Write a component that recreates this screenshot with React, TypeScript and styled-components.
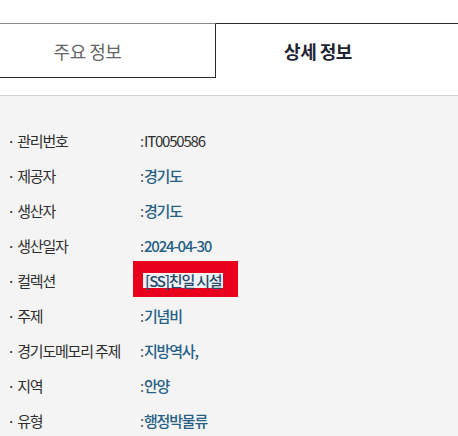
import React from 'react'
import styled, { createGlobalStyle } from 'styled-components'

const GlobalStyle = createGlobalStyle`
  html, body {
    margin: 0;
    padding: 0;
    background: #fff;
    font-family: "Noto Sans CJK KR", "Noto Sans", sans-serif;
  }
`;

const Page = styled.div`
  width: 458px;
  height: 436px;
  overflow: hidden;
  padding-top: 23px;
  box-sizing: border-box;
`;

const Tabs = styled.div`
  display: flex;
  height: 55px;
`;

const Tab = styled.div<{ $active?: boolean }>`
  box-sizing: border-box;
  display: flex;
  align-items: center;
  justify-content: center;
  font-size: 18px;
  letter-spacing: -0.5px;
  ${({ $active }) =>
    $active
      ? `
    flex: 1;
    border-top: 1px solid #2b2b2b;
    color: #1e2433;
    font-weight: 700;
    padding-right: 38px;
  `
      : `
    width: 216px;
    border-top: 1px solid #8a8a8a;
    border-right: 1px solid #2b2b2b;
    border-bottom: 1px solid #2b2b2b;
    color: #666;
    padding-right: 40px;
  `}
`;

const Detail = styled.div`
  margin-top: 17px;
  border-top: 1px solid #d2d2d2;
  background: #f4f4f4;
  padding-top: 27px;
  height: 400px;
`;

const Row = styled.div`
  display: flex;
  align-items: center;
  height: 35px;
  font-size: 15px;
  letter-spacing: -1.2px;
`;

const Label = styled.div`
  width: 140px;
  box-sizing: border-box;
  padding-left: 7px;
  color: #2e2e2e;
  display: flex;
  gap: 3px;
`;

const Colon = styled.span`
  color: #555;
  margin-right: 1px;
`;

const Value = styled.span<{ $plain?: boolean }>`
  color: ${({ $plain }) => ($plain ? '#2e2e2e' : '#265f86')};
  font-weight: ${({ $plain }) => ($plain ? 400 : 500)};
`;

const Marked = styled.span`
  display: inline-flex;
  align-items: center;
  background: #e8001d;
  margin: -12px 0 -8px -7px;
  padding: 12px 15px 9px 10px;
`;

const Selected = styled.span`
  background: #eef2f7;
  color: #24496a;
  font-weight: 500;
  padding: 0 2px;
  line-height: 15px;
`;

type Item = { label: string; value: string; plain?: boolean; marked?: boolean };

const items: Item[] = [
  { label: '관리번호', value: 'IT0050586', plain: true },
  { label: '제공자', value: '경기도' },
  { label: '생산자', value: '경기도' },
  { label: '생산일자', value: '2024-04-30' },
  { label: '컬렉션', value: '[SS]친일 시설', marked: true },
  { label: '주제', value: '기념비' },
  { label: '경기도메모리 주제', value: '지방역사,' },
  { label: '지역', value: '안양' },
  { label: '유형', value: '행정박물류' },
];

export default function App() {
  return (
    <>
      <GlobalStyle />
      <Page>
        <Tabs>
          <Tab>주요 정보</Tab>
          <Tab $active>상세 정보</Tab>
        </Tabs>
        <Detail>
          {items.map(item => (
            <Row key={item.label}>
              <Label>
                <span>·</span>
                <span>{item.label}</span>
              </Label>
              {item.marked ? (
                <Marked>
                  <Selected>{item.value}</Selected>
                </Marked>
              ) : (
                <>
                  <Colon>:</Colon>
                  <Value $plain={item.plain}>{item.value}</Value>
                </>
              )}
            </Row>
          ))}
        </Detail>
      </Page>
    </>
  )
}
